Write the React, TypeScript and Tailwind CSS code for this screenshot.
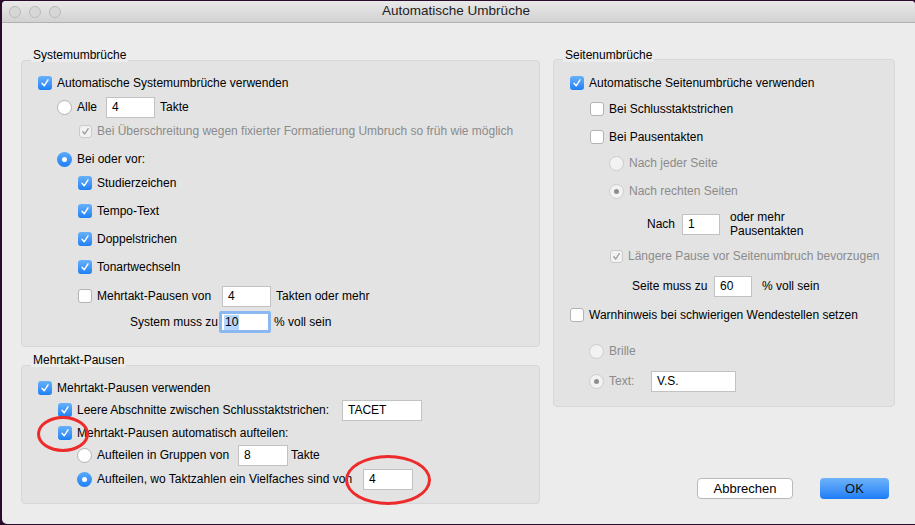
import React from 'react';

type BoxProps = { checked?: boolean; disabled?: boolean };

const CheckBox: React.FC<BoxProps> = ({ checked, disabled }) => {
    if (checked && !disabled) {
        return (
            <div className="w-[14px] h-[14px] rounded-[3px] bg-gradient-to-b from-[#68b1fa] to-[#1c7ff5] flex items-center justify-center shrink-0">
                <svg width="10" height="10" viewBox="0 0 10 10">
                    <path d="M2 5.3 L4.2 7.8 L8 1.8" fill="none" stroke="#fff" strokeWidth="1.4" strokeLinecap="round" strokeLinejoin="round" />
                </svg>
            </div>
        );
    }
    if (checked && disabled) {
        return (
            <div className="w-[13px] h-[13px] rounded-[3px] bg-[#f2f2f2] border border-[#cacaca] flex items-center justify-center shrink-0">
                <svg width="9" height="9" viewBox="0 0 10 10">
                    <path d="M2 5.3 L4.2 7.8 L8 1.8" fill="none" stroke="#9a9a9a" strokeWidth="1.4" strokeLinecap="round" strokeLinejoin="round" />
                </svg>
            </div>
        );
    }
    return <div className="w-[14px] h-[14px] rounded-[3px] bg-white border border-[#b3b3b3] shrink-0"></div>;
};

const Radio: React.FC<BoxProps> = ({ checked, disabled }) => {
    if (checked && !disabled) {
        return (
            <div className="w-[15px] h-[15px] rounded-full bg-gradient-to-b from-[#5aa9fa] to-[#1c7ff5] flex items-center justify-center shrink-0">
                <div className="w-[5px] h-[5px] rounded-full bg-white"></div>
            </div>
        );
    }
    if (disabled) {
        return (
            <div className="w-[15px] h-[15px] rounded-full bg-[#f2f2f2] border border-[#cccccc] flex items-center justify-center shrink-0">
                {checked && <div className="w-[5px] h-[5px] rounded-full bg-[#8e8e8e]"></div>}
            </div>
        );
    }
    return <div className="w-[15px] h-[15px] rounded-full bg-white border border-[#b3b3b3] shrink-0"></div>;
};

const Field: React.FC<{ value: string; w: string }> = ({ value, w }) => (
    <div className={`${w} h-[21px] bg-white border border-[#c2c2c2] flex items-center pl-[5px] text-[12px] text-black shrink-0`}>{value}</div>
);

const App: React.FC = () => {
    return (
        <div className="w-[915px] h-[525px] bg-[#2b0b2c] pl-[2px] pt-[1px] pb-[1px] font-['Liberation_Sans',Arial,sans-serif] text-[12px] text-black whitespace-nowrap overflow-hidden">
            <div className="w-full h-full bg-[#ececec] rounded-bl-[5px] rounded-t-[4px] flex flex-col">
                {/* title bar */}
                <div className="h-[22px] shrink-0 bg-gradient-to-b from-[#e9e9e9] to-[#d2d2d2] border-b border-[#b1b1b1] rounded-t-[4px] flex items-center">
                    <div className="flex items-center gap-[8px] pl-[7px]">
                        <div className="w-[12px] h-[12px] rounded-full bg-[#d7d7d7] border border-[#bbbbbb]"></div>
                        <div className="w-[12px] h-[12px] rounded-full bg-[#d7d7d7] border border-[#bbbbbb]"></div>
                        <div className="w-[12px] h-[12px] rounded-full bg-[#d7d7d7] border border-[#bbbbbb]"></div>
                    </div>
                    <div className="flex-1 text-center pr-[64px] text-[13.5px] text-[#222]">Automatische Umbrüche</div>
                </div>

                <div className="flex gap-[13px] pl-[19px] pt-[25px]">
                    {/* left column */}
                    <div className="w-[519px] flex flex-col">
                        <div className="self-start ml-[10px] px-[2px] h-[14px] leading-[14px] bg-[#ececec] relative z-10">Systemumbrüche</div>
                        <div className="-mt-[2px] bg-[#e3e3e3] border border-[#d7d7d7] rounded-[4px] pt-[10px] pb-[12px] pl-[16px] flex flex-col">
                            <div className="h-[24px] flex items-center gap-[5px]">
                                <CheckBox checked />
                                <span>Automatische Systemumbrüche verwenden</span>
                            </div>
                            <div className="h-[24px] flex items-center pl-[19px]">
                                <Radio />
                                <span className="ml-[5px]">Alle</span>
                                <div className="ml-[9px]"><Field value="4" w="w-[49px]" /></div>
                                <span className="ml-[5px]">Takte</span>
                            </div>
                            <div className="h-[24px] flex items-center pl-[41px] gap-[5px] text-[#8b8b8b]">
                                <CheckBox checked disabled />
                                <span>Bei Überschreitung wegen fixierter Formatierung Umbruch so früh wie möglich</span>
                            </div>
                            <div className="h-[20px] mt-[6px] flex items-center pl-[19px]">
                                <Radio checked />
                                <span className="ml-[5px]">Bei oder vor:</span>
                            </div>
                            <div className="h-[28px] flex items-center pl-[40px] gap-[5px]">
                                <CheckBox checked />
                                <span>Studierzeichen</span>
                            </div>
                            <div className="h-[28px] flex items-center pl-[40px] gap-[5px]">
                                <CheckBox checked />
                                <span>Tempo-Text</span>
                            </div>
                            <div className="h-[28px] flex items-center pl-[40px] gap-[5px]">
                                <CheckBox checked />
                                <span>Doppelstrichen</span>
                            </div>
                            <div className="h-[28px] flex items-center pl-[40px] gap-[5px]">
                                <CheckBox checked />
                                <span>Tonartwechseln</span>
                            </div>
                            <div className="h-[28px] mt-[1px] flex items-center pl-[40px]">
                                <CheckBox />
                                <span className="ml-[5px] w-[125px]">Mehrtakt-Pausen von</span>
                                <Field value="4" w="w-[49px]" />
                                <span className="ml-[5px]">Takten oder mehr</span>
                            </div>
                            <div className="h-[24px] flex items-center pl-[92px]">
                                <span className="w-[89px]">System muss zu</span>
                                <div className="w-[52px] h-[22px] rounded-[2px] border-[3px] border-[#8cb8f2] bg-white flex items-center pl-[2px] shrink-0">
                                    <span className="bg-[#b3d7ff] leading-[15px] px-[1px]">10</span>
                                </div>
                                <span className="ml-[3px]">% voll sein</span>
                            </div>
                        </div>

                        <div className="mt-[6px] self-start ml-[10px] px-[2px] h-[14px] leading-[14px] bg-[#ececec] relative z-10">Mehrtakt-Pausen</div>
                        <div className="-mt-[2px] bg-[#e3e3e3] border border-[#d7d7d7] rounded-[4px] pt-[11px] pb-[13px] pl-[16px] flex flex-col relative">
                            <div className="h-[22px] flex items-center gap-[5px]">
                                <CheckBox checked />
                                <span>Mehrtakt-Pausen verwenden</span>
                            </div>
                            <div className="h-[22px] flex items-center pl-[20px]">
                                <CheckBox checked />
                                <span className="ml-[5px] w-[265px]">Leere Abschnitte zwischen Schlusstaktstrichen:</span>
                                <Field value="TACET" w="w-[80px]" />
                            </div>
                            <div className="h-[22px] mt-[1px] flex items-center pl-[20px]">
                                <CheckBox checked />
                                <span className="ml-[5px]">Mehrtakt-Pausen automatisch aufteilen:</span>
                            </div>
                            <div className="h-[22px] flex items-center pl-[39px]">
                                <Radio />
                                <span className="ml-[5px] w-[141px]">Aufteilen in Gruppen von</span>
                                <Field value="8" w="w-[50px]" />
                                <span className="ml-[3px]">Takte</span>
                            </div>
                            <div className="h-[22px] mt-[2px] flex items-center pl-[39px]">
                                <Radio checked />
                                <span className="ml-[5px] w-[266px]">Aufteilen, wo Taktzahlen ein Vielfaches sind von</span>
                                <Field value="4" w="w-[50px]" />
                            </div>
                            {/* red annotation circles */}
                            <div className="absolute left-[15px] top-[50px] w-[52px] h-[36px] rounded-[50%] border-[3px] border-[#ee2b2b]"></div>
                            <div className="absolute left-[323px] top-[89px] w-[86px] h-[50px] rounded-[50%] border-[3px] border-[#ee2b2b]"></div>
                        </div>
                    </div>

                    {/* right column */}
                    <div className="w-[342px] flex flex-col">
                        <div className="self-start ml-[10px] px-[2px] h-[14px] leading-[14px] bg-[#ececec] relative z-10">Seitenumbrüche</div>
                        <div className="-mt-[3px] bg-[#e3e3e3] border border-[#d7d7d7] rounded-[4px] pt-[10px] pb-[12px] pl-[16px] flex flex-col">
                            <div className="h-[26px] flex items-center gap-[5px]">
                                <CheckBox checked />
                                <span>Automatische Seitenumbrüche verwenden</span>
                            </div>
                            <div className="h-[26px] flex items-center pl-[20px] gap-[5px]">
                                <CheckBox />
                                <span>Bei Schlusstaktstrichen</span>
                            </div>
                            <div className="h-[26px] mt-[2px] flex items-center pl-[20px] gap-[5px]">
                                <CheckBox />
                                <span>Bei Pausentakten</span>
                            </div>
                            <div className="h-[26px] flex items-center pl-[39px] gap-[5px] text-[#8b8b8b]">
                                <Radio disabled />
                                <span>Nach jeder Seite</span>
                            </div>
                            <div className="h-[26px] mt-[2px] flex items-center pl-[39px] gap-[5px] text-[#8b8b8b]">
                                <Radio checked disabled />
                                <span>Nach rechten Seiten</span>
                            </div>
                            <div className="h-[28px] mt-[6px] flex items-center pl-[77px]">
                                <span className="w-[35px]">Nach</span>
                                <Field value="1" w="w-[38px]" />
                                <span className="ml-[10px] leading-[14px]">oder mehr<br />Pausentakten</span>
                            </div>
                            <div className="h-[26px] mt-[5px] flex items-center pl-[40px] gap-[5px] text-[#8b8b8b]">
                                <CheckBox checked disabled />
                                <span>Längere Pause vor Seitenumbruch bevorzugen</span>
                            </div>
                            <div className="h-[26px] mt-[4px] flex items-center pl-[62px]">
                                <span className="w-[82px]">Seite muss zu</span>
                                <Field value="60" w="w-[38px]" />
                                <span className="ml-[10px]">% voll sein</span>
                            </div>
                            <div className="h-[26px] mt-[3px] flex items-center gap-[5px]">
                                <CheckBox />
                                <span>Warnhinweis bei schwierigen Wendestellen setzen</span>
                            </div>
                            <div className="h-[26px] mt-[10px] flex items-center pl-[19px] gap-[5px] text-[#8b8b8b]">
                                <Radio disabled />
                                <span>Brille</span>
                            </div>
                            <div className="h-[26px] mt-[4px] flex items-center pl-[19px] text-[#8b8b8b]">
                                <Radio checked disabled />
                                <span className="ml-[5px] w-[42px]">Text:</span>
                                <Field value="V.S." w="w-[85px]" />
                            </div>
                        </div>

                        <div className="mt-[71px] flex justify-end gap-[27px] pr-[6px]">
                            <div className="w-[96px] h-[21px] bg-white border border-[#b9b9b9] rounded-[4px] flex items-center justify-center text-[13px]">Abbrechen</div>
                            <div className="w-[69px] h-[21px] bg-gradient-to-b from-[#6db3fa] to-[#1a7cf5] rounded-[4px] flex items-center justify-center text-[13px] text-[#111]">OK</div>
                        </div>
                    </div>
                </div>
            </div>
        </div>
    );
};

export default App;
